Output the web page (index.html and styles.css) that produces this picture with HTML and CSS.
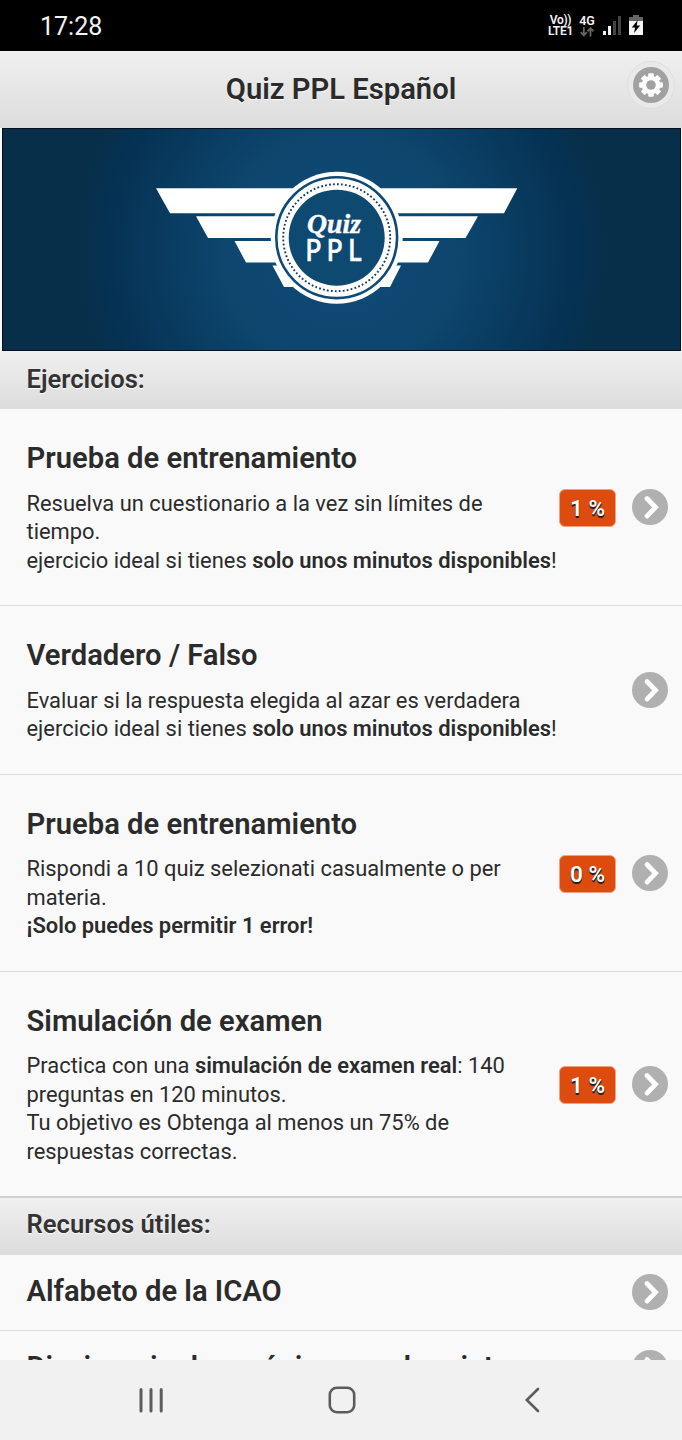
FILE: index.html
```
<!DOCTYPE html>
<html lang="es">
<head>
    <meta charset="UTF-8" />
    <meta name="viewport" content="width=device-width, initial-scale=1.0" />
    <title>Quiz PPL Español</title>
    <link rel="stylesheet" href="styles.css">
</head>
<body>
    <svg class="defs" width="0" height="0">
        <symbol id="arrow" viewBox="0 0 36 36">
            <circle cx="18" cy="18" r="18" fill="#b0b0b0" />
            <path d="M15 9.5l8.5 8.8-8.5 8.8" fill="none" stroke="#fff" stroke-width="4.8" stroke-linecap="round" />
        </symbol>
    </svg>

    <div class="status-bar">
        <span class="time">17:28</span>
        <div class="status-icons">
            <div class="volte"><span>Vo))</span><span>LTE1</span></div>
            <div class="network">
                <span>4G</span>
                <svg width="14" height="10" viewBox="0 0 14 10" fill="none" stroke="#666" stroke-width="1.8">
                    <path d="M3.8 0v8M.8 5.2l3 3.2 3-3.2M10.5 9.5v-8M7.5 4.3l3-3.2 3 3.2" />
                </svg>
            </div>
            <svg class="signal" width="18" height="19" viewBox="0 0 18 19">
                <path d="M0 15h3v4H0zM5 10h3v9H5z" fill="#f4f4f4" />
                <path d="M10 5h3v14h-3zM15 0h3v19h-3z" fill="#444" />
            </svg>
            <svg class="battery" width="14" height="20" viewBox="0 0 14 20">
                <path d="M4 0h6v2h4v5H0V2h4z" fill="#666" />
                <path d="M0 6h14v14H0z" fill="#f4f4f4" />
                <path d="M8.6 5.2L2.8 12.4h3.3L5 18l6.2-7.4H7.8z" fill="#000" />
            </svg>
        </div>
    </div>

    <div class="header">
        <h1>Quiz PPL Español</h1>
        <button class="settings">
            <svg width="36" height="36" viewBox="0 0 36 36">
                <circle cx="18" cy="18" r="18" fill="#a1a1a1" />
                <g fill="#fff">
                    <circle cx="18" cy="18" r="9.3" />
                    <rect x="15.2" y="6.2" width="5.6" height="23.6" rx="1" />
                    <rect x="15.2" y="6.2" width="5.6" height="23.6" rx="1" transform="rotate(45 18 18)" />
                    <rect x="15.2" y="6.2" width="5.6" height="23.6" rx="1" transform="rotate(90 18 18)" />
                    <rect x="15.2" y="6.2" width="5.6" height="23.6" rx="1" transform="rotate(135 18 18)" />
                </g>
                <circle cx="18" cy="18" r="4.8" fill="#a1a1a1" />
            </svg>
        </button>
    </div>

    <div class="banner">
        <svg width="677" height="221" viewBox="3 129 677 221">
            <g fill="#fff">
                <path d="M156 188.3h361.3L504 213.3H170z" />
                <path d="M196 216.2h282L465.5 238H208z" />
                <path d="M234.5 241h205L428 262.5H246z" />
                <path d="M272.5 265.5H401L390 287H284z" />
                <circle cx="336.7" cy="237.7" r="66" />
            </g>
            <circle cx="336.7" cy="237.7" r="60.4" fill="none" stroke="#0f4a74" stroke-width="2.6" />
            <circle cx="336.7" cy="237.7" r="53.5" fill="none" stroke="#173b5d" stroke-width="1.9" stroke-dasharray="1.8 2.2" />
            <circle cx="336.7" cy="237.7" r="48" fill="#0e4972" />
            <text class="logo-script" x="307" y="233" textLength="54" lengthAdjust="spacingAndGlyphs">Quiz</text>
            <text class="logo-ppl" transform="translate(305.5 261) scale(.85 1)">PPL</text>
        </svg>
    </div>

    <h2 class="divider">Ejercicios:</h2>
    <ul class="list">
        <li>
            <div class="text">
                <h3>Prueba de entrenamiento</h3>
                <p>Resuelva un cuestionario a la vez sin límites de<br>tiempo.<br>ejercicio ideal si tienes <strong>solo unos minutos disponibles</strong>!</p>
            </div>
            <span class="badge">1 %</span>
            <svg class="arrow"><use href="#arrow" /></svg>
        </li>
        <li>
            <div class="text">
                <h3>Verdadero / Falso</h3>
                <p>Evaluar si la respuesta elegida al azar es verdadera<br>ejercicio ideal si tienes <strong>solo unos minutos disponibles</strong>!</p>
            </div>
            <svg class="arrow"><use href="#arrow" /></svg>
        </li>
        <li>
            <div class="text">
                <h3>Prueba de entrenamiento</h3>
                <p>Rispondi a 10 quiz selezionati casualmente o per<br>materia.<br><strong>¡Solo puedes permitir 1 error!</strong></p>
            </div>
            <span class="badge">0 %</span>
            <svg class="arrow"><use href="#arrow" /></svg>
        </li>
        <li>
            <div class="text">
                <h3>Simulación de examen</h3>
                <p>Practica con una <strong>simulación de examen real</strong>: 140<br>preguntas en 120 minutos.<br>Tu objetivo es Obtenga al menos un 75% de<br>respuestas correctas.</p>
            </div>
            <span class="badge">1 %</span>
            <svg class="arrow"><use href="#arrow" /></svg>
        </li>
    </ul>

    <h2 class="divider resources">Recursos útiles:</h2>
    <ul class="list links">
        <li>
            <h3 class="text">Alfabeto de la ICAO</h3>
            <svg class="arrow"><use href="#arrow" /></svg>
        </li>
        <li>
            <h3 class="text">Diccionario de acrónimos y abreviaturas</h3>
            <svg class="arrow"><use href="#arrow" /></svg>
        </li>
    </ul>

    <div class="nav-bar">
        <svg width="26" height="26" viewBox="0 0 26 26" stroke="#5c5c5c" stroke-width="3" stroke-linecap="round">
            <path d="M3 2.5v21.5M13 2.5v21.5M23.2 2.5v21.5" />
        </svg>
        <svg width="28" height="28" viewBox="0 0 28 28" fill="none" stroke="#5c5c5c" stroke-width="2.6">
            <rect x="1.8" y="1.8" width="24.4" height="24.4" rx="7" />
        </svg>
        <svg width="26" height="28" viewBox="0 0 26 28" fill="none" stroke="#5c5c5c" stroke-width="2.6" stroke-linecap="round">
            <path d="M18 3L6.8 14 18 25" />
        </svg>
    </div>
</body>
</html>
```
FILE: styles.css
```
* {
    margin: 0;
    padding: 0;
    box-sizing: border-box;
}

body {
    display: flex;
    flex-direction: column;
    height: 1440px;
    overflow: hidden;
    background: #f9f9f9;
    color: #2b2b2b;
    font-family: Roboto, sans-serif;
    text-shadow: 0 1px 0 #fff;
}

svg {
    display: block;
    flex-shrink: 0;
}

.defs {
    position: absolute;
}

.status-bar {
    display: flex;
    justify-content: space-between;
    flex-shrink: 0;
    height: 51px;
    padding: 0 39px 0 40px;
    background: #000;
    color: #f4f4f4;
    text-shadow: none;
}

.time {
    font-size: 25px;
    line-height: 53px;
}

.status-icons {
    display: flex;
    align-items: flex-start;
    padding-top: 15px;
}

.volte {
    display: flex;
    flex-direction: column;
    align-items: center;
    width: 25px;
    font-size: 12px;
    font-weight: 600;
    line-height: 11px;
    letter-spacing: -0.3px;
}

.network {
    display: flex;
    flex-direction: column;
    align-items: center;
    width: 16px;
    margin-left: 6px;
    font-size: 12.5px;
    font-weight: 600;
    line-height: 12px;
}

.signal {
    margin: 1px 0 0 8px;
}

.battery {
    margin-left: 8px;
}

.header {
    display: flex;
    flex-shrink: 0;
    height: 77px;
    padding: 10px 7px 0 55px;
    background: linear-gradient(#f0f0f0, #dcdcdc);
}

.header h1 {
    flex: 1;
    font-size: 29.2px;
    font-weight: 600;
    line-height: 57px;
    text-align: center;
}

.settings {
    width: 48px;
    height: 48px;
    padding: 5px;
    border: 1px solid #dfdfdf;
    border-radius: 50%;
    background: #e9e9e9;
}

.banner {
    flex-shrink: 0;
    height: 223px;
    margin: 0 1px 0 2px;
    border: 1px solid #06101c;
    background: radial-gradient(circle 270px at 50% 55%, #0f4c78, #0d456d 45%, #053152 88%, #072f49);
}

.logo-script {
    fill: #fff;
    stroke: #fff;
    stroke-width: 0.4px;
    font: italic 700 27px "Liberation Serif", serif;
    text-shadow: none;
}

.logo-ppl {
    fill: #fff;
    stroke: #fff;
    stroke-width: 0.7px;
    font: 500 30px Lato, sans-serif;
    letter-spacing: 7px;
    text-shadow: none;
}

.divider {
    flex-shrink: 0;
    height: 58px;
    padding-left: 26.5px;
    background: linear-gradient(#f0f0f0, #dcdcdc);
    color: #333;
    font-size: 25.6px;
    font-weight: 600;
    line-height: 56px;
}

.resources {
    height: 59px;
    border-top: 2px solid #d0d0d0;
    line-height: 52px;
}

.list {
    flex-shrink: 0;
    list-style: none;
}

.list li {
    display: flex;
    align-items: center;
    padding: 30px 14px 30px 26.5px;
    border-bottom: 1px solid #dcdcdc;
}

.list:not(.links) li:last-child {
    border-bottom: none;
}

.text {
    flex: 1;
    white-space: nowrap;
    min-width: 0;
}

.list h3 {
    font-size: 29.2px;
    font-weight: 600;
    line-height: 38px;
}

.list p {
    margin-top: 12.8px;
    font-size: 21.9px;
    line-height: 28.4px;
}

.list strong {
    font-weight: 600;
}

.badge {
    width: 57px;
    height: 38px;
    margin: 2px 16px 0 0;
    border: 1px solid #f0a184;
    border-radius: 6px;
    background: #de4b0e;
    color: #fff;
    font-size: 22.5px;
    font-weight: 600;
    line-height: 36px;
    text-align: center;
    text-shadow: 0 1px 1px #222, 0 2px 0 #222;
}

.arrow {
    width: 36px;
    height: 36px;
}

.links li {
    height: 75.5px;
    padding: 0 14px 0 26.5px;
}

.links h3 {
    padding-bottom: 2px;
}

.nav-bar {
    position: absolute;
    top: 1360px;
    left: 0;
    right: 0;
    display: flex;
    justify-content: space-between;
    align-items: center;
    height: 80px;
    padding: 0 136px 0 138px;
    background: #f1f1f1;
}
```
